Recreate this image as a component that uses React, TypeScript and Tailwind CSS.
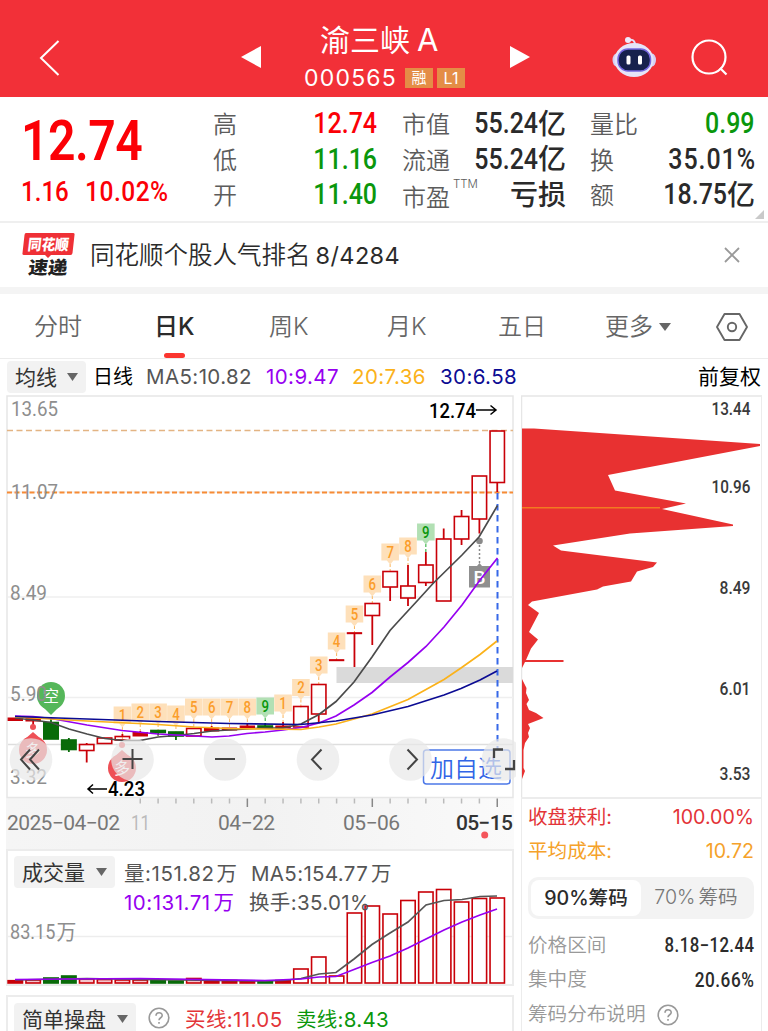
import type { ReactNode } from "react";
import clsx from "clsx";

type Candle = {
    top: number;
    bottom: number;
    high?: number;
    low?: number;
    green?: boolean;
    solid?: boolean;
};

const STEP = 17.85;
const cx = (i: number) => 15.3 + i * STEP;

const candles: Candle[] = [
    { top: 718, bottom: 720.5, solid: true },
    { top: 718, bottom: 721, low: 727, solid: true },
    { top: 722.5, bottom: 739, high: 717, green: true },
    { top: 740, bottom: 749.5, high: 738, low: 752, green: true },
    { top: 744.5, bottom: 750.5, high: 743, low: 762.5 },
    { top: 738, bottom: 743.5 },
    { top: 736.5, bottom: 740, high: 734 },
    { top: 732.5, bottom: 736, high: 731, solid: true },
    { top: 730.5, bottom: 732.5, low: 735.5, green: true },
    { top: 732, bottom: 736, low: 740, green: true },
    { top: 728.5, bottom: 736 },
    { top: 728, bottom: 731, high: 726, solid: true },
    { top: 728, bottom: 730, solid: true },
    { top: 726, bottom: 728, high: 724, solid: true },
    { top: 726, bottom: 728, high: 723, green: true },
    { top: 726, bottom: 728, high: 722, solid: true },
    { top: 706.5, bottom: 727 },
    { top: 684.5, bottom: 714, low: 722 },
    { top: 659.7, bottom: 660.7, solid: true },
    { top: 632.7, bottom: 633.7, low: 667, solid: true },
    { top: 603.5, bottom: 615.5, low: 645 },
    { top: 571.5, bottom: 587, low: 601 },
    { top: 586, bottom: 598, high: 565, low: 606 },
    { top: 565, bottom: 582.5, high: 552, low: 586 },
    { top: 539, bottom: 601, high: 528.5 },
    { top: 516.5, bottom: 539, high: 510, low: 545 },
    { top: 476, bottom: 519, low: 533.5 },
    { top: 431, bottom: 482.5, low: 492 },
];

// [candle index, label, centre y]
const counters: [number, number, number][] = [
    [6, 1, 715], [7, 2, 712], [8, 3, 712], [9, 4, 714], [10, 5, 707], [11, 6, 707], [12, 7, 707], [13, 8, 707],
    [14, 9, 706], [15, 1, 703], [16, 2, 687.5], [17, 3, 665], [18, 4, 641], [19, 5, 614], [20, 6, 584],
    [21, 7, 552], [22, 8, 546], [23, 9, 532],
];

const volumes = [
    980.7, 980, 978, 976, 979, 979.5, 980, 980, 980.5, 981, 978.5, 980, 980.5, 981, 981, 980.5, 969, 957, 976, 913,
    906, 914, 900.5, 892, 889.5, 902, 898.5, 898,
];

const averages = [
    { color: "#4b4b4b", points: "15,718 33,720 51,722.5 69,729 87,734 105,738.5 122,740.5 140,740.5 158,737 176,735.5 194,733.5 212,731 229,730 247,729 265,728 283,728 301,724 319,714.5 336,701.5 354,682 372,657 390,630.5 400,619.5 418,600 433,583.5 462,555 479,537 497.5,505.5" },
    { color: "#9600f0", points: "15,716 33,716.5 51,718.5 87,725 122,730.5 158,734 194,736 212,737 229,736 247,733.5 265,732 283,730 301,727.5 319,723 336,716 354,705 372,692.5 390,677 408,662.5 426,646.5 444,627 462,605 480,580 497.5,558" },
    { color: "#fbb21a", points: "15,717 87,721 158,724.5 194,727 229,728.5 265,729 301,729.5 319,727 336,724 372,714 408,699.5 444,679.5 461,668 480,654.5 497,641" },
    { color: "#0b0b93", points: "15,716.5 87,719 158,721.5 229,723.5 301,724.5 336,721 372,715 408,706.5 444,695 461,688.5 480,680 497,671" },
];

const CHIPS =
    "522,428.5 534,428.5 760,444 760,446 608,475 615,490.5 686,503.5 662,509 733,524.5 733,526 630,533.5 553,545.5 561,550.5 657,562.5 653,567 637,571.5 631,581.5 603,586.5 597,589.5 532,601.5 528,605 539,613 529,632 538,639.5 531,648.5 526,660 522,668";
const CHIPS_LOW =
    "522,679 526.5,688 526,693 529,700 526.5,704 529,710 536,713 543.5,718 528,724 530,728 528,733 529,737 525,743 523.5,750 523.5,768 525,771 522,779";

const cjk = "font-['Inter','Noto_Sans_CJK_SC',sans-serif]";
const digits = "font-['Roboto','Noto_Sans_CJK_SC',sans-serif]";

function Din({ children, className }: { children: ReactNode; className?: string }) {
    return <span className={clsx(digits, "inline-block scale-x-[.86] whitespace-nowrap", className)}>{children}</span>;
}

function Header() {
    return (
        <header className="flex h-[97px] shrink-0 items-center bg-[#f23038] text-white">
            <svg className="ml-[36px] mt-[18px] h-[40px] w-[26px]" viewBox="0 0 26 40" fill="none" stroke="currentColor" strokeWidth="2">
                <path d="M22.5 3 5 20l17.5 17" />
            </svg>
            <svg className="ml-[178px] mt-[16px] h-[24px] w-[22px]" viewBox="0 0 22 24" fill="currentColor">
                <path d="M1 12 21 1v22z" />
            </svg>
            <div className="ml-[42px] mt-[17px] flex w-[162px] flex-col">
                <div className="whitespace-nowrap pl-[16px] text-[30px] leading-[38px]">
                    渝三峡<span className="ml-[7px] text-[31px]">A</span>
                </div>
                <div className="mt-[3px] flex items-center whitespace-nowrap leading-[32px]">
                    <span className="w-[93px] text-[23px] tracking-[1.2px]">000565</span>
                    <span className="ml-[8px] flex h-[20px] w-[28px] shrink-0 items-center justify-center bg-[#e48d46] text-[15px] leading-none">融</span>
                    <span className="ml-[4px] flex h-[20px] w-[28px] shrink-0 items-center justify-center bg-[#e48d46] text-[16px] leading-none">L1</span>
                </div>
            </div>
            <svg className="ml-[43px] mt-[16px] h-[24px] w-[22px]" viewBox="0 0 22 24" fill="currentColor">
                <path d="M21 12 1 1v22z" />
            </svg>
            <svg className="ml-[79px] mt-[16px] h-[42px] w-[48px]" viewBox="0 0 48 42">
                <path d="M18 4c4-1 7 0 7 5" fill="none" stroke="#e4dffa" strokeWidth="2" />
                <circle cx="18" cy="4" r="3" fill="#eeeafd" />
                <ellipse cx="6.500" cy="24" rx="4" ry="6.500" fill="#d4cff4" />
                <ellipse cx="42" cy="24" rx="4" ry="6.500" fill="#d4cff4" />
                <ellipse cx="24" cy="24" rx="19.500" ry="17" fill="#e6e4f8" />
                <rect x="8" y="13" width="32.500" height="22" rx="10" fill="#16214d" stroke="#7567df" strokeWidth="1.500" />
                <rect x="16.500" y="19.500" width="4" height="9" rx="1.500" fill="#fff" />
                <rect x="28" y="19.500" width="4" height="9" rx="1.500" fill="#fff" />
            </svg>
            <svg className="ml-[31px] mt-[17px] h-[40px] w-[40px]" viewBox="0 0 40 40" fill="none" stroke="currentColor" strokeWidth="2.200">
                <circle cx="20" cy="20" r="16.500" />
                <path d="m31 31 6.500 6.500" />
            </svg>
        </header>
    );
}

const quoteColumns = [
    {
        box: "ml-[213px] w-[164px]",
        rows: [["高", "12.74", "text-[#fb0006]"], ["低", "11.16", "text-[#0a970c]"], ["开", "11.40", "text-[#0a970c]"]],
    },
    {
        box: "ml-[25px] w-[164px]",
        rows: [["市值", "55.24亿", "text-[#2a2a2a]"], ["流通", "55.24亿", "text-[#2a2a2a]"], ["市盈", "亏损", "text-[#2a2a2a]"]],
    },
    {
        box: "ml-[24px] w-[165px]",
        rows: [["量比", "0.99", "text-[#0a970c]"], ["换", "35.01%", "text-[#2a2a2a]"], ["额", "18.75亿", "text-[#2a2a2a]"]],
    },
];

function QuoteValue({ value, color }: { value: string; color: string }) {
    const unit = value.endsWith("亿");
    if (value === "亏损") return <span className={clsx("text-[28px] font-medium", color)}>{value}</span>;
    return (
        <span className={clsx("flex items-center justify-end", color)}>
            <Din className={clsx("origin-right text-[29px] font-medium", value.endsWith("%") && "-mr-[1px] tracking-[1.100px]")}>
                {unit ? value.slice(0, -1) : value}
            </Din>
            {unit && <span className="text-[28px] font-medium">亿</span>}
        </span>
    );
}

function Quote() {
    return (
        <section className="relative flex h-[126px] shrink-0 border-b-2 border-[#efefef] pt-[9px]">
            <div className="absolute left-[21px] top-[10px] text-[#fb0006]">
                <Din className="h-[66px] origin-left text-[56px] font-semibold leading-[68px] tracking-[-.6px]">12.74</Din>
                <div className="flex h-[38px] items-center">
                    <Din className="w-[64px] origin-left text-[28px] font-medium">1.16</Din>
                    <Din className="origin-left text-[28.500px] font-medium tracking-[.6px]">10.02%</Din>
                </div>
            </div>
            {quoteColumns.map(col => (
                <div key={col.box} className={clsx("flex flex-col", col.box)}>
                    {col.rows.map(([label, value, color]) => (
                        <div key={label} className="flex h-[35.500px] items-center justify-between whitespace-nowrap leading-none">
                            <span className={clsx("flex items-start text-[24px] font-[350] text-[#5c5c5c]", label === "市盈" ? "pt-[6px]" : "pt-[3px]")}>
                                {label}
                                {label === "市盈" && <sup className="-top-[7px] ml-[3px] text-[11.500px] leading-none">TTM</sup>}
                            </span>
                            <QuoteValue value={value} color={color} />
                        </div>
                    ))}
                </div>
            ))}
            <svg className="absolute right-[4px] top-[113px] h-[9px] w-[9px]" viewBox="0 0 9 9">
                <path d="M9 0v9H0z" fill="#c9c9c9" />
            </svg>
        </section>
    );
}

function Notice() {
    return (
        <section className="flex h-[71px] shrink-0 items-start border-b-[7px] border-[#f4f4f4] text-[#2b2b2b]">
            <svg className="ml-[20px] mt-[8px] h-[48px] w-[58px]" viewBox="20 231 58 48">
                <path d="M26 233h47q2 0 1.500 2l-2 18q-.2 2-2 2H51l-3 3-3-3H24q-2 0-1.500-2l2-18q.2-2 1.500-2z" fill="#ef3036" />
                <g className={cjk} fontWeight="900" transform="skewX(-7)">
                    <text x="58" y="250.500" fontSize="15" fill="#fff" textLength="41" lengthAdjust="spacingAndGlyphs">同花顺</text>
                    <text x="61.500" y="274" fontSize="18" fill="#222" textLength="39" lengthAdjust="spacingAndGlyphs">速递</text>
                </g>
            </svg>
            <div className="ml-[12px] flex-1 whitespace-nowrap text-[24.500px] font-[350] leading-[65px]">
                同花顺个股人气排名<span className="ml-[5px] text-[23.500px] font-normal tracking-[.4px]">8/4284</span>
            </div>
            <svg className="mr-[28px] mt-[24px] h-[16px] w-[16px]" viewBox="0 0 16 16" stroke="#999" strokeWidth="1.800">
                <path d="m1 1 14 14M15 1 1 15" />
            </svg>
        </section>
    );
}

function Tabs() {
    return (
        <nav className="flex h-[65px] shrink-0 items-center whitespace-nowrap border-b border-[#ececec] pt-[2px] text-[24px] font-[350] text-[#666]">
            <span className="ml-[34px] w-[120px]">分时</span>
            <span className="relative flex h-full w-[115px] items-center font-medium text-[#2b2b2b]">
                日K
                <i className="absolute bottom-0 left-[10px] h-[5px] w-[21px] rounded-full bg-[#fb352f]" />
            </span>
            <span className="w-[118px]">周K</span>
            <span className="w-[111px]">月K</span>
            <span className="w-[107px]">五日</span>
            <span>更多</span>
            <svg className="ml-[6px] h-[8px] w-[12px]" viewBox="0 0 12 8" fill="#666"><path d="M0 0h12L6 8z" /></svg>
            <svg className="ml-[44px] h-[30px] w-[34px]" viewBox="0 0 34 30" fill="none" stroke="#666" strokeWidth="1.900">
                <path d="M9.500 2h15L32 15l-7.500 13h-15L2 15z" strokeLinejoin="round" />
                <circle cx="17" cy="15" r="4.200" />
            </svg>
        </nav>
    );
}

function PickButton({ children, className }: { children: ReactNode; className?: string }) {
    return (
        <button className={clsx("flex h-[32px] items-center justify-between rounded-[4px] bg-[#f2f2f2] px-[8px] text-[21px] leading-none text-[#333]", className)}>
            {children}
            <svg className="h-[8px] w-[11px]" viewBox="0 0 11 8" fill="#666"><path d="M0 0h11L5.500 8z" /></svg>
        </button>
    );
}

function Indicators() {
    return (
        <div className="flex h-[36px] shrink-0 items-center whitespace-nowrap text-[20.500px]">
            <PickButton className="ml-[7px] w-[79px] shrink-0">均线</PickButton>
            <span className="ml-[7px] w-[53px] text-[20px] text-black">日线</span>
            <span className="w-[120px] tracking-[.400px] text-[#555]">MA5:10.82</span>
            <span className="w-[86px] tracking-[.4px] text-[#9600f0]">10:9.47</span>
            <span className="w-[88px] tracking-[.4px] text-[#fbb21a]">20:7.36</span>
            <span className="tracking-[.4px] text-[#0b0b93]">30:6.58</span>
            <span className="ml-auto mr-[7px] text-[21px] text-black">前复权</span>
        </div>
    );
}

function Counter({ i, n, y }: { i: number; n: number; y: number }) {
    const green = n === 9;
    const x = cx(i);
    return (
        <g>
            <path d={`M${x} ${y + 12}v${i < 10 ? 12 : 9}`} stroke={green ? "#1ba82b" : "#fbb55c"} strokeWidth="1" strokeDasharray="3 2" />
            <path
                d={`M${x - 8.800} ${y - 8.500}h17.600v17h-5.500l-3.300 4-3.300-4h-5.500z`}
                fill={green ? "#b2e0b4" : "#fee0ba"}
            />
            <text x={x} y={y + 5.500} textAnchor="middle" fontSize="16" fontWeight="500" fill={green ? "#0a970c" : "#fb9d2b"} textLength="7.500" lengthAdjust="spacingAndGlyphs">{n}</text>
        </g>
    );
}

function SignalDrop({ x, y, label }: { x: number; y: number; label: string }) {
    return (
        <g>
            <circle cx={x} cy={y - 23} r="3" fill="#ee5056" />
            <path d={`M${x - 8} ${y - 11} ${x} ${y - 18}l8 7z`} fill="#ee5056" />
            <circle cx={x} cy={y} r="14" fill="#ee5056" />
            <text x={x} y={y + 6} fontSize="16" textAnchor="middle" fill="#fff" className={cjk}>{label}</text>
        </g>
    );
}

function KLineChart() {
    return (
        <svg className={clsx("h-[454px] w-[516px] shrink-0", digits)} viewBox="0 395 516 454" fill="none">
            <defs>
                <linearGradient id="axis" x1="0" x2="1" y1="0" y2="0">
                    <stop offset="0" stopColor="#f5f5f5" />
                    <stop offset=".5" stopColor="#f2f2f2" />
                    <stop offset="1" stopColor="#fafafa" />
                </linearGradient>
            </defs>
            <rect x="6" y="798" width="508" height="51" fill="url(#axis)" />
            <path d="M7 797.500V396h506v401.500z" stroke="#e6e6e6" strokeWidth="1.500" />
            <path d="M8 492h505M8 597h505M8 697.500h505" stroke="#efefef" strokeWidth="1.300" />
            <path d="M8 744.500h505" stroke="#dedede" strokeWidth="1.500" />
            <rect x="336.500" y="667" width="176.500" height="16" fill="#dadada" />
            <path d="M7 430.500h506" stroke="#e3b483" strokeWidth="1.300" strokeDasharray="6 3.500" />
            <path d="M7 492.500h506" stroke="#f78b35" strokeWidth="2" strokeDasharray="5 2.500" />
            <path d="M497.500 493v257" stroke="#3668e8" strokeWidth="2" strokeDasharray="6.500 4.500" />

            {counters.map(([i, n, y]) => <Counter key={i} i={i} n={n} y={y} />)}

            {candles.map((c, i) => {
                const color = c.green ? "#096b09" : "#c90008";
                return (
                    <g key={i} stroke={color} strokeWidth="1.800">
                        {c.high && <path d={`M${cx(i)} ${c.high}V${c.top}`} />}
                        {c.low && <path d={`M${cx(i)} ${c.bottom}V${c.low}`} />}
                        <rect
                            x={cx(i) - 7.200}
                            y={c.top}
                            width="14.400"
                            height={c.bottom - c.top}
                            fill={c.green || c.solid ? color : "none"}
                            strokeWidth={c.solid ? 1 : 1.600}
                        />
                    </g>
                );
            })}

            {/* buy marker */}
            <circle cx="479.500" cy="541" r="3.300" fill="#8a8a8a" />
            <path d="M479.500 545v20" stroke="#8a8a8a" strokeWidth="1.500" strokeDasharray="2 2" />
            <path d="M469 566h8l2.500-3 2.500 3h8v21.500h-21z" fill="#8f8f8f" />
            <text x="479.500" y="584" fontSize="19" fontWeight="500" textAnchor="middle" fill="#fff">B</text>

            {averages.map(a => <polyline key={a.color} points={a.points} stroke={a.color} strokeWidth="1.700" />)}

            {/* short / long signals */}
            <path d="M43 707 51 715l8-8z" fill="#55b75a" />
            <circle cx="51" cy="696" r="14" fill="#55b75a" />
            <text x="51" y="702" fontSize="16" textAnchor="middle" fill="#fff" className={cjk}>空</text>
            <SignalDrop x={33} y={750} label="多" />
            <SignalDrop x={122} y={768} label="多" />

            <g fill="#8e8e8e" fontSize="20.500">
                <text x="11" y="416" textLength="47" lengthAdjust="spacingAndGlyphs">13.65</text>
                <text x="11" y="499" textLength="47" lengthAdjust="spacingAndGlyphs">11.07</text>
                <text x="10" y="600" textLength="37" lengthAdjust="spacingAndGlyphs">8.49</text>
                <text x="10" y="700.500" textLength="37" lengthAdjust="spacingAndGlyphs">5.90</text>
                <text x="10" y="783.500" textLength="37" lengthAdjust="spacingAndGlyphs">3.32</text>
            </g>

            <path d="M88 789h19m-14-4.500-5 4.500 5 4.500" stroke="#000" strokeWidth="1.500" />
            <text x="108" y="796" fontSize="20.500" fontWeight="500" fill="#000" textLength="37" lengthAdjust="spacingAndGlyphs">4.23</text>
            <text x="429" y="417.500" fontSize="20.500" fontWeight="500" fill="#000" textLength="47" lengthAdjust="spacingAndGlyphs">12.74</text>
            <path d="M476 410h20m-5.500-4.500 5.500 4.500-5.500 4.500" stroke="#000" strokeWidth="1.500" />

            <rect x="423.500" y="750" width="86.500" height="34" rx="3" fill="#fff" stroke="#4c78e8" strokeWidth="1.500" />
            <text x="430" y="777" fontSize="24" fontWeight="350" fill="#3265e6" className={cjk} textLength="72">加自选</text>

            {/* floating chart controls */}
            <g fill="#e8e8e8" fillOpacity=".7">
                {[31, 132.500, 225, 318, 410.500, 503].map(x => <circle key={x} cx={x} cy="759.500" r="21.300" />)}
            </g>
            <g stroke="#444" strokeWidth="2">
                <path d="m30 749.500-9 10 9 10M39 749.500l-9 10 9 10" />
                <path d="M122.500 759h20M132.500 749v20M215 759h20" />
                <path d="m321.500 749.500-9.500 10 9.500 10M407.500 749.500l9.500 10-9.500 10" />
                <path d="M494 758v-8.500h9M514 760v9h-9" strokeWidth="2.300" />
            </g>

            {candles.map((_, i) =>
                i >= 7 && <path key={i} d={`M${cx(i)} 798.500v${i === 13 || i === 20 || i === 27 ? 8.500 : 5}`} stroke={i === 13 || i === 20 || i === 27 ? "#888" : "#bbb"} strokeWidth="1.500" />
            )}
            <g fill="#777" fontSize="21">
                <text x="7" y="829.500" textLength="113" lengthAdjust="spacing">2025−04−02</text>
                <text x="131" y="829.500" fill="#bbb" textLength="19" lengthAdjust="spacingAndGlyphs">11</text>
                <text x="218" y="829.500" textLength="57">04−22</text>
                <text x="343" y="829.500" textLength="57">05−06</text>
                <text x="456" y="829.500" textLength="57" fontWeight="500" fill="#333">05−15</text>
            </g>
            <circle cx="484.700" cy="835" r="3.500" fill="#f4555b" />
        </svg>
    );
}

function VolumeBars() {
    return (
        <svg className="absolute -left-[2px] -top-[2px] h-[137px] w-[508px]" viewBox="6 849 508 137" fill="none">
            <path d="M8 936.500h505" stroke="#ededed" strokeWidth="1.300" />
            {volumes.map((top, i) => {
                const green = candles[i].green;
                return (
                    <rect
                        key={i}
                        x={cx(i) - 7.200}
                        y={top}
                        width="14.400"
                        height={983 - top}
                        fill={green ? "#096b09" : i === 0 || (i > 10 && i < 16) ? "#c90008" : i < 16 ? "#f3c5cc" : "#fff"}
                        stroke={green ? "#096b09" : "#c90008"}
                        strokeWidth="1.600"
                    />
                );
            })}
            <polyline points="15,980 87,978.500 140,979.500 265,981 283,980.500 301,978.500 319,974 336,972.500 354,959 372,944.500 390,933 408,922 426,905 444,900.500 462,899.500 480,896.500 497,896" stroke="#555" strokeWidth="1.700" />
            <polyline points="15,979.500 69,979 140,978.500 265,980.500 301,979 319,977 336,976.500 354,969.500 372,962.500 390,956 408,948 426,939 444,930 462,922 480,915 497,909" stroke="#9600f0" strokeWidth="1.700" />
        </svg>
    );
}

function Volume() {
    return (
        <section className="relative ml-[6px] h-[137px] w-[508px] shrink-0 border-2 border-[#ececec]">
            <VolumeBars />
            <div className="relative flex whitespace-nowrap pl-[6px] pt-[5px] text-[20.500px] text-[#555]">
                <PickButton className="w-[101px] shrink-0">成交量</PickButton>
                <div className="ml-[9px] leading-[29px]">
                    <div className="flex pt-[3px]">
                        <span className="w-[127px] tracking-[.55px]">量:151.82<span className="ml-[2px]">万</span></span>
                        <span className="tracking-[.35px]">MA5:154.77<span className="ml-[3px]">万</span></span>
                    </div>
                    <div className="flex">
                        <span className="w-[125px] tracking-[.5px] text-[#9600f0]">10:131.71<span className="ml-[3px]">万</span></span>
                        <span className="tracking-[.35px]">换手:35.01%</span>
                    </div>
                </div>
            </div>
            <div className="relative ml-[2px] text-[#8e8e8e]">
                <Din className="origin-left text-[21px] leading-[30px]">83.15<span className="ml-[1px] inline-block origin-left scale-x-[1.1]">万</span></Din>
            </div>
        </section>
    );
}

function QuestionIcon() {
    return (
        <svg className="h-[22px] w-[22px] shrink-0" viewBox="0 0 22 22" fill="none" stroke="#999" strokeWidth="1.600">
            <circle cx="11" cy="11" r="9.800" />
            <path d="M8 8.800c0-4 6.200-4 6.200-.3 0 2.300-3.200 2.200-3.200 4.700M11 15v1.800" />
        </svg>
    );
}

function Strategy() {
    return (
        <section className="ml-[6px] mt-[9px] flex h-[60px] w-[508px] shrink-0 items-start whitespace-nowrap border-2 border-[#ececec] pl-[6px] pt-[6px] text-[20.500px]">
            <PickButton className="w-[122px]">简单操盘</PickButton>
            <div className="ml-[12px] mt-[4px]"><QuestionIcon /></div>
            <span className="ml-[15px] w-[111px] leading-[33px] tracking-[.4px] text-[#e33438]">买线:11.05</span>
            <span className="leading-[33px] tracking-[.3px] text-[#0a970c]">卖线:8.43</span>
        </section>
    );
}

function ChipPanel() {
    const labels: [string, number][] = [["13.44", 415], ["10.96", 493], ["8.49", 593.5], ["6.01", 694.5], ["3.53", 779.5]];
    return (
        <aside className="ml-[5px] flex w-[241px] shrink-0 flex-col border-r border-[#ececec] text-[19.600px]">
            <svg className={clsx("h-[404px] w-[241px] shrink-0", digits)} viewBox="521 395 241 404" fill="none">
                <path d="M521.500 799V396H761" stroke="#e6e6e6" strokeWidth="1.500" />
                <path d="M521 798h240" stroke="#ececec" strokeWidth="2" />
                <polygon points={CHIPS} fill="#e83131" />
                <polygon points={CHIPS_LOW} fill="#e83131" />
                <path d="M522 661h41.500" stroke="#e83131" strokeWidth="2" />
                <path d="M522 507.800h138" stroke="#f27a20" strokeWidth="1.500" />
                {labels.map(([text, y]) => (
                    <text
                        key={text}
                        x="750.500"
                        y={y}
                        textAnchor="end"
                        fontSize="18.500"
                        fontWeight="500"
                        fill="#3a3a3a"
                        textLength={text.length > 4 ? 39 : 31}
                        lengthAdjust="spacingAndGlyphs"
                    >
                        {text}
                    </text>
                ))}
            </svg>
            <div className="flex flex-1 flex-col border-l border-[#ececec] pl-[6px] pr-[7px]">
                <div className="flex h-[37px] items-center justify-between text-[#e33438]"><span>收盘获利:</span><span>100.00%</span></div>
                <div className="flex h-[32px] items-center justify-between text-[#f5a22a]"><span>平均成本:</span><span>10.72</span></div>
                <div className="mt-[9px] flex h-[42px] items-center rounded-[10px] bg-[#f3f3f3] p-[3px] text-center">
                    <span className="h-full w-[110px] rounded-[8px] bg-white font-medium leading-[37px] text-[#2b2b2b]">90%筹码</span>
                    <span className="flex-1 font-[350] text-[#777]">70%<span className="ml-[3px]">筹码</span></span>
                </div>
                <div className="mt-[9px] flex h-[35px] items-center justify-between whitespace-nowrap text-[#999]">
                    <span className="font-[350]">价格区间</span>
                    <Din className="origin-right text-[19.500px] font-medium tracking-[.5px] text-[#2b2b2b]">8.18−12.44</Din>
                </div>
                <div className="flex h-[34px] items-center justify-between text-[#999]">
                    <span className="font-[350]">集中度</span>
                    <Din className="origin-right text-[20px] font-medium tracking-[.6px] text-[#2b2b2b]">20.66%</Din>
                </div>
                <div className="flex h-[36px] items-center gap-[11px] font-[350] text-[#999]">筹码分布说明<QuestionIcon /></div>
            </div>
        </aside>
    );
}

export default function App() {
    return (
        <div className={clsx("flex h-[1031px] w-[768px] flex-col overflow-hidden bg-white", cjk)}>
            <Header />
            <Quote />
            <Notice />
            <Tabs />
            <Indicators />
            <main className="flex min-h-0 flex-1">
                <div className="flex w-[516px] shrink-0 flex-col overflow-hidden">
                    <KLineChart />
                    <Volume />
                    <Strategy />
                </div>
                <ChipPanel />
            </main>
        </div>
    );
}
